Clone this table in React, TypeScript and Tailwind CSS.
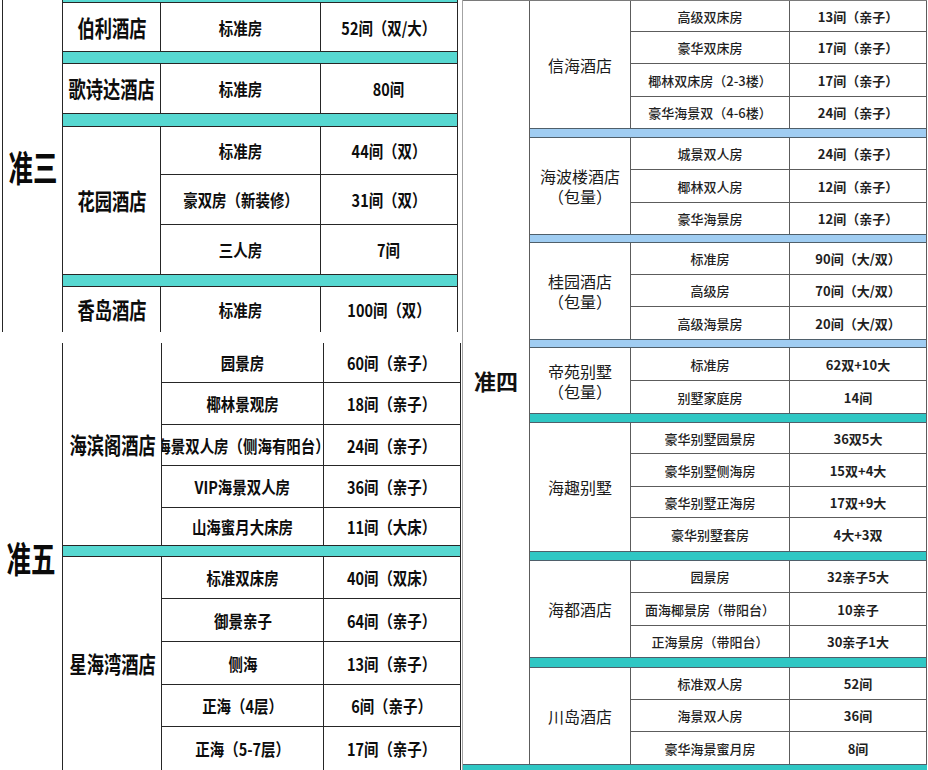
import React from 'react';

type Room = { name: string; count: string; h: string };
type Group = { hotel: string[]; rooms: Room[]; band?: string };

type Theme = {
  line: string;
  hotelW: string;
  roomW: string;
  hotelText: string;
  roomText: string;
  countText: string;
  bandLine: string;
};

const zhunSan: Group[] = [
  {
    hotel: ['伯利酒店'],
    rooms: [{ name: '标准房', count: '52间（双/大）', h: 'h-[48px]' }],
    band: 'h-[13px] bg-[#57d8d1]'
  },
  {
    hotel: ['歌诗达酒店'],
    rooms: [{ name: '标准房', count: '80间', h: 'h-[49px]' }],
    band: 'h-[14px] bg-[#57d8d1]'
  },
  {
    hotel: ['花园酒店'],
    rooms: [
      { name: '标准房', count: '44间（双）', h: 'h-[48px]' },
      { name: '豪双房（新装修）', count: '31间（双）', h: 'h-[50px]' },
      { name: '三人房', count: '7间', h: 'h-[49px]' }
    ],
    band: 'h-[13px] bg-[#57d8d1]'
  },
  {
    hotel: ['香岛酒店'],
    rooms: [{ name: '标准房', count: '100间（双）', h: 'h-[45px]' }]
  }
];

const zhunWu: Group[] = [
  {
    hotel: ['海滨阁酒店'],
    rooms: [
      { name: '园景房', count: '60间（亲子）', h: 'h-[40px]' },
      { name: '椰林景观房', count: '18间（亲子）', h: 'h-[42px]' },
      { name: '海景双人房（侧海有阳台）', count: '24间（亲子）', h: 'h-[41px]' },
      { name: 'VIP海景双人房', count: '36间（亲子）', h: 'h-[42px]' },
      { name: '山海蜜月大床房', count: '11间（大床）', h: 'h-[37px]' }
    ],
    band: 'h-[12px] bg-[#57d8d1]'
  },
  {
    hotel: ['星海湾酒店'],
    rooms: [
      { name: '标准双床房', count: '40间（双床）', h: 'h-[42px]' },
      { name: '御景亲子', count: '64间（亲子）', h: 'h-[43px]' },
      { name: '侧海', count: '13间（亲子）', h: 'h-[43px]' },
      { name: '正海（4层）', count: '6间（亲子）', h: 'h-[42px]' },
      { name: '正海（5-7层）', count: '17间（亲子）', h: 'h-[43px]' }
    ]
  }
];

const zhunSi: Group[] = [
  {
    hotel: ['信海酒店'],
    rooms: [
      { name: '高级双床房', count: '13间（亲子）', h: 'h-[31px]' },
      { name: '豪华双床房', count: '17间（亲子）', h: 'h-[32px]' },
      { name: '椰林双床房（2-3楼）', count: '17间（亲子）', h: 'h-[33px]' },
      { name: '豪华海景双（4-6楼）', count: '24间（亲子）', h: 'h-[31px]' }
    ],
    band: 'h-[10px] bg-[#a0cdf2]'
  },
  {
    hotel: ['海波楼酒店', '（包量）'],
    rooms: [
      { name: '城景双人房', count: '24间（亲子）', h: 'h-[32px]' },
      { name: '椰林双人房', count: '12间（亲子）', h: 'h-[33px]' },
      { name: '豪华海景房', count: '12间（亲子）', h: 'h-[31px]' }
    ],
    band: 'h-[9px] bg-[#a0cdf2]'
  },
  {
    hotel: ['桂园酒店', '（包量）'],
    rooms: [
      { name: '标准房', count: '90间（大/双）', h: 'h-[32px]' },
      { name: '高级房', count: '70间（大/双）', h: 'h-[32px]' },
      { name: '高级海景房', count: '20间（大/双）', h: 'h-[32px]' }
    ],
    band: 'h-[9px] bg-[#a0cdf2]'
  },
  {
    hotel: ['帝苑别墅', '（包量）'],
    rooms: [
      { name: '标准房', count: '62双+10大', h: 'h-[33px]' },
      { name: '别墅家庭房', count: '14间', h: 'h-[32px]' }
    ],
    band: 'h-[10px] bg-[#2fc7c4]'
  },
  {
    hotel: ['海趣别墅'],
    rooms: [
      { name: '豪华别墅园景房', count: '36双5大', h: 'h-[31px]' },
      { name: '豪华别墅侧海房', count: '15双+4大', h: 'h-[33px]' },
      { name: '豪华别墅正海房', count: '17双+9大', h: 'h-[31px]' },
      { name: '豪华别墅套房', count: '4大+3双', h: 'h-[33px]' }
    ],
    band: 'h-[10px] bg-[#2fc7c4]'
  },
  {
    hotel: ['海都酒店'],
    rooms: [
      { name: '园景房', count: '32亲子5大', h: 'h-[32px]' },
      { name: '面海椰景房（带阳台）', count: '10亲子', h: 'h-[33px]' },
      { name: '正海景房（带阳台）', count: '30亲子1大', h: 'h-[31px]' }
    ],
    band: 'h-[11px] bg-[#2fc7c4]'
  },
  {
    hotel: ['川岛酒店'],
    rooms: [
      { name: '标准双人房', count: '52间', h: 'h-[32px]' },
      { name: '海景双人房', count: '36间', h: 'h-[32px]' },
      { name: '豪华海景蜜月房', count: '8间', h: 'h-[32px]' }
    ]
  }
];

const boldTheme = {
  line: 'border-[#262626]',
  hotelText: 'inline-block whitespace-nowrap text-[23px] leading-none font-bold text-[#0d0d0d] scale-x-[0.75]',
  roomText: 'inline-block whitespace-nowrap text-[17px] leading-none font-bold text-[#0d0d0d] scale-x-[0.85]',
  countText: 'inline-block whitespace-nowrap text-[17px] leading-none font-bold text-[#0d0d0d] scale-x-[0.85]',
  bandLine: 'border-[#262626]'
};

const topTheme: Theme = { ...boldTheme, hotelW: 'w-[98px]', roomW: 'w-[160px]' };
const bottomTheme: Theme = { ...boldTheme, hotelW: 'w-[99px]', roomW: 'w-[162px]' };
const rightTheme: Theme = {
  line: 'border-[#5c5c5c]',
  hotelW: 'w-[101px]',
  roomW: 'w-[159px]',
  hotelText: 'block whitespace-nowrap text-[16px] leading-[20px] text-[#1a1a1a] text-center',
  roomText: 'whitespace-nowrap text-[13px] leading-none font-medium text-[#1f1f1f]',
  countText: 'whitespace-nowrap text-[13px] leading-none font-semibold text-[#1f1f1f]',
  bandLine: 'border-[#4f5f6a]'
};

function Groups({ groups, t }: { groups: Group[]; t: Theme }) {
  return (
    <>
      {groups.map((g, gi) => (
        <React.Fragment key={gi}>
          <div className="flex">
            <div className={`${t.hotelW} shrink-0 flex flex-col items-center justify-center border-r ${t.line}`}>
              {g.hotel.map((line, li) => (
                <span key={li} className={t.hotelText}>
                  {line}
                </span>
              ))}
            </div>
            <div className="flex-1 flex flex-col">
              {g.rooms.map((r, ri) => (
                <div
                  key={ri}
                  className={`${r.h} flex ${ri < g.rooms.length - 1 ? 'border-b' : ''} ${t.line}`}
                >
                  <div className={`${t.roomW} shrink-0 overflow-hidden flex items-center justify-center border-r ${t.line}`}>
                    <span className={t.roomText}>{r.name}</span>
                  </div>
                  <div className="flex-1 overflow-hidden flex items-center justify-center">
                    <span className={t.countText}>{r.count}</span>
                  </div>
                </div>
              ))}
            </div>
          </div>
          {g.band && <div className={`${g.band} border-y ${t.bandLine}`} />}
        </React.Fragment>
      ))}
    </>
  );
}

export default function App() {
  return (
    <div className="w-[928px] h-[770px] overflow-hidden bg-white flex font-['Noto_Sans_CJK_SC','Noto_Sans',sans-serif]">
      <div className="w-[462px] shrink-0 flex flex-col">
        <div className="h-[332px] flex">
          <div className="ml-[2px] w-[60px] shrink-0 border-l border-[#262626] flex items-center justify-center">
            <span className="inline-block whitespace-nowrap text-[36px] leading-none font-bold text-[#0a0a0a] scale-x-[0.68]">
              准三
            </span>
          </div>
          <div className="w-[396px] shrink-0 border-x border-[#262626] flex flex-col">
            <div className="h-[3px] bg-[#57d8d1] border-b border-[#262626]" />
            <Groups groups={zhunSan} t={topTheme} />
          </div>
        </div>
        <div className="h-[11px]" />
        <div className="h-[427px] flex">
          <div className="w-[62px] shrink-0 flex items-center justify-center">
            <span className="inline-block whitespace-nowrap text-[36px] leading-none font-bold text-[#0a0a0a] scale-x-[0.68]">
              准五
            </span>
          </div>
          <div className="w-[399px] shrink-0 border-x border-[#262626] flex flex-col">
            <Groups groups={zhunWu} t={bottomTheme} />
          </div>
        </div>
      </div>

      <div className="w-[465px] shrink-0 border-l border-[#a3a3a3] flex flex-col">
        <div className="h-[764px] flex border-t border-[#7a7a7a]">
          <div className={`w-[67px] shrink-0 border-r ${rightTheme.line} flex items-center justify-center pb-[6px]`}>
            <span className="text-[22px] leading-none font-semibold text-[#111]">准四</span>
          </div>
          <div className={`w-[397px] shrink-0 border-r ${rightTheme.line} flex flex-col`}>
            <Groups groups={zhunSi} t={rightTheme} />
          </div>
        </div>
        <div className="h-[6px] w-[464px] bg-[#2fc7c4] border-t border-[#4f5f6a]" />
      </div>
    </div>
  );
}
